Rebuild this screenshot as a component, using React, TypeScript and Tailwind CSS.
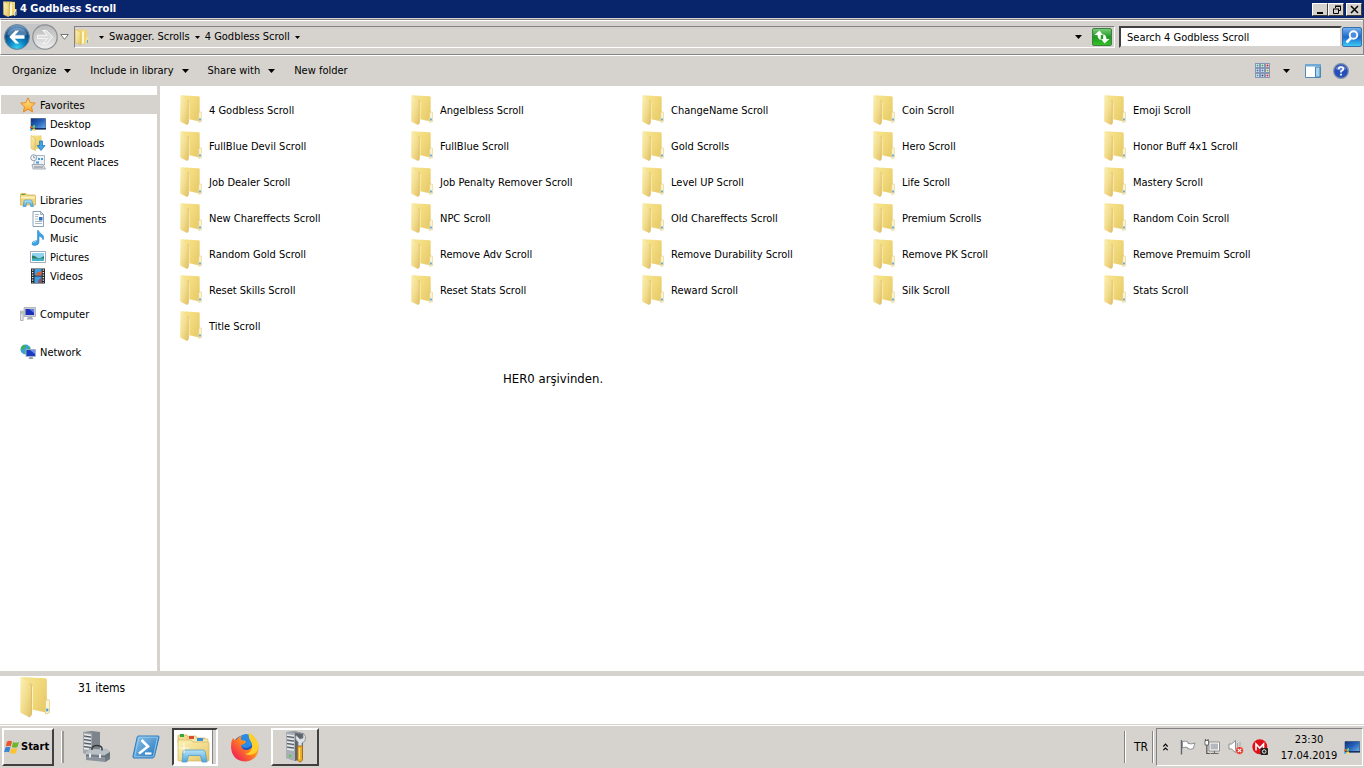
import type { ReactNode } from "react";

const folders = [
    "4 Godbless Scroll", "Angelbless Scroll", "ChangeName Scroll", "Coin Scroll", "Emoji Scroll",
    "FullBlue Devil Scroll", "FullBlue Scroll", "Gold Scrolls", "Hero Scroll", "Honor Buff 4x1 Scroll",
    "Job Dealer Scroll", "Job Penalty Remover Scroll", "Level UP Scroll", "Life Scroll", "Mastery Scroll",
    "New Chareffects Scroll", "NPC Scroll", "Old Chareffects Scroll", "Premium Scrolls", "Random Coin Scroll",
    "Random Gold Scroll", "Remove Adv Scroll", "Remove Durability Scroll", "Remove PK Scroll", "Remove Premuim Scroll",
    "Reset Skills Scroll", "Reset Stats Scroll", "Reward Scroll", "Silk Scroll", "Stats Scroll",
    "Title Scroll",
];

// Gradients shared by every icon, mounted once
function Gradients() {
    return (
        <svg width="0" height="0" className="absolute" aria-hidden="true">
            <defs>
                <linearGradient id="page" x1="0" y1="0" x2="1" y2=".6">
                    <stop offset="0" stopColor="#f6e694" />
                    <stop offset=".5" stopColor="#f3dc80" />
                    <stop offset="1" stopColor="#e9cd6c" />
                </linearGradient>
                <linearGradient id="cover" x1="0" y1="0" x2="1" y2="1">
                    <stop offset="0" stopColor="#fbf0b4" />
                    <stop offset=".5" stopColor="#f3de8f" />
                    <stop offset="1" stopColor="#e0c067" />
                </linearGradient>
                <radialGradient id="back" cx=".5" cy=".95" r=".9">
                    <stop offset="0" stopColor="#35d3f5" />
                    <stop offset=".4" stopColor="#0a7fbd" />
                    <stop offset=".75" stopColor="#0b4a85" />
                    <stop offset="1" stopColor="#6f9cc4" />
                </radialGradient>
                <linearGradient id="silver" x1="0" y1="0" x2="0" y2="1">
                    <stop offset="0" stopColor="#b9b9b9" />
                    <stop offset=".5" stopColor="#cfcfcf" />
                    <stop offset="1" stopColor="#f1f1f1" />
                </linearGradient>
                <linearGradient id="screen" x1="0" y1="0" x2="1" y2="1">
                    <stop offset="0" stopColor="#0d2f7c" />
                    <stop offset=".5" stopColor="#2765bd" />
                    <stop offset="1" stopColor="#6fb4ea" />
                </linearGradient>
                <linearGradient id="star" x1="0" y1="0" x2="0" y2="1">
                    <stop offset="0" stopColor="#ffe98a" />
                    <stop offset="1" stopColor="#fba52b" />
                </linearGradient>
                <linearGradient id="green" x1="0" y1="0" x2="0" y2="1">
                    <stop offset="0" stopColor="#7ccf7c" />
                    <stop offset=".5" stopColor="#1e9a22" />
                    <stop offset="1" stopColor="#35c226" />
                </linearGradient>
                <linearGradient id="azure" x1="0" y1="0" x2="0" y2="1">
                    <stop offset="0" stopColor="#79b4ee" />
                    <stop offset=".5" stopColor="#1b68cf" />
                    <stop offset="1" stopColor="#3fd0f6" />
                </linearGradient>
                <linearGradient id="stand" x1="0" y1="0" x2="0" y2="1">
                    <stop offset="0" stopColor="#b7e3f7" />
                    <stop offset="1" stopColor="#4aa5da" />
                </linearGradient>
                <linearGradient id="shell" x1="0" y1="0" x2="1" y2="1">
                    <stop offset="0" stopColor="#8fc6ec" />
                    <stop offset="1" stopColor="#1f72ba" />
                </linearGradient>
                <linearGradient id="fox" x1="1" y1="0" x2="0" y2="1">
                    <stop offset="0" stopColor="#ffe226" />
                    <stop offset=".45" stopColor="#ff8a1c" />
                    <stop offset=".8" stopColor="#f5334b" />
                    <stop offset="1" stopColor="#e0126f" />
                </linearGradient>
            </defs>
        </svg>
    );
}

function FolderIcon({ className }: { className: string }) {
    return (
        <svg viewBox="0 0 22 30" className={className} aria-hidden="true">
            <path d="M1 .3 18.500 1.200Q19.700 1.300 19.700 2.500V26.500L8 24Z" fill="url(#page)" />
            <path d="M19.300 17h1.500q.9 0 .9 1v8q0 .8-.8.9l-2.200.5V18.500Z" fill="#fbf5d8" stroke="#e3cb80" strokeWidth=".6" />
            <path d="M19.200 23.500h1.600v2h-1.600Z" fill="#4a9be0" />
            <path d="M8 6.500 9.500 7.500V24.500L8 28Z" fill="#fff4b8" />
            <path d="M.3 1Q.3 0 1.200.5L7.300 5Q8.400 5.800 8.400 7V27.500Q8.200 29.500 6.500 29.700L.9 27Q.2 26.500.2 25.500Z" fill="url(#cover)" />
            <path d="M7.300 5Q8.400 5.800 8.400 7V27.500Q8.200 29.500 6.500 29.700" fill="none" stroke="#d5b561" strokeWidth=".6" />
        </svg>
    );
}

function SmallFolder() {
    return (
        <svg viewBox="0 0 14 16" className="h-4 w-3.5 shrink-0" aria-hidden="true">
            <path d="M1 .5 6.500.5V15L5 15Z" fill="#eed27a" />
            <path d="M6.500.5 12 1V14L6 15Z" fill="#f0d470" />
            <path d="M7 3 9 1.500V14L7 15Z" fill="#fdf6cc" />
            <path d="M11 8h2.500v6L11 15Z" fill="#f0dfa0" />
            <path d="M12 11h1v3h-1Z" fill="#5aa8e6" />
            <path d="M.3.500 5 3Q6 4 6 5V15.500H4.500L.5 13.500Z" fill="url(#cover)" stroke="#d8b64e" strokeWidth=".5" />
        </svg>
    );
}

function Icon({ children, className = "size-4" }: { children: ReactNode; className?: string }) {
    return <svg viewBox="0 0 16 16" className={`${className} shrink-0`} aria-hidden="true">{children}</svg>;
}

function Caret({ small = false }: { small?: boolean }) {
    return small ? (
        <svg viewBox="0 0 5 3" className="h-[3px] w-[5px]" aria-hidden="true"><path d="M0 0h5L2.500 3Z" /></svg>
    ) : (
        <svg viewBox="0 0 7 4" className="h-1 w-[7px]" aria-hidden="true"><path d="M0 0h7L3.500 4Z" /></svg>
    );
}

const star = <Icon><path d="M8 .8 10.200 5.600 15.300 6.200 11.500 9.700 12.600 14.900 8 12.300 3.400 14.900 4.500 9.700.7 6.200 5.800 5.600Z" fill="url(#star)" stroke="#e5882a" /></Icon>;

const desktop = (
    <Icon>
        <path d="M1 2.500h14.500V13H1Z" fill="url(#screen)" stroke="#29456f" strokeWidth=".6" />
        <path d="M1 12h15v1.500H1Z" fill="#15305e" />
        <path d="M0 11l2-1v2l-2 .5Z" fill="#f0602a" /><path d="M2.500 10 5 9v2.500L2.500 12Z" fill="#8bd04a" />
        <path d="M0 13h2v2L0 14.500Z" fill="#4ab0f0" /><path d="M2.500 12.500H5V15l-2.500-.5Z" fill="#ffd54a" />
    </Icon>
);

const downloads = (
    <Icon>
        <path d="M1 .5h10.500V13.500L6 14Z" fill="url(#page)" />
        <path d="M1 .5 5.500 3.500V15.500L1 13.500Z" fill="url(#cover)" stroke="#dcbc5c" strokeWidth=".6" />
        <path d="M9.500 6h3v4.500H15L11 15.500 7 10.500h2.500Z" fill="#3fa3e8" stroke="#1b6fb8" strokeWidth=".7" />
    </Icon>
);

const recent = (
    <Icon>
        <path d="M4 1.500h10.500v9.500H4Z" fill="#eef3f8" stroke="#8d98a5" strokeWidth=".7" />
        <path d="M8 4h2v2H8zM11 4h2v2h-2zM6 7.500h3v2H6z" fill="#4a9bd8" />
        <path d="M2 10.500h11l2.500 4.500H3Z" fill="#dfe3e8" stroke="#8b929a" strokeWidth=".7" />
        <path d="M4 13h9" stroke="#7b838c" />
        <circle cx="3.700" cy="3.700" r="3" fill="#f6f9fc" stroke="#8c9db0" /><path d="M3.700 1.800v2h1.500" fill="none" stroke="#526c8e" strokeWidth=".7" />
    </Icon>
);

const libraries = (
    <Icon>
        <path d="M.5 2.500q0-1 1-1H6L7 3h7.500q1 0 1 1V13H.5Z" fill="#f0d678" stroke="#ceaa47" strokeWidth=".7" />
        <path d="M1.500 2.500H5" stroke="#3fae42" />
        <path d="M1 5.500h14" stroke="#fcf3c4" strokeWidth="2" />
        <path d="M3 14.500 4 9q.2-1 1-1h6q.8 0 1 1l1.500 5.500h-2.700L10 11H6.500L6 14.500Z" fill="url(#stand)" stroke="#3d93c8" strokeWidth=".6" />
    </Icon>
);

const documents = (
    <Icon>
        <path d="M3 .5h7.500l3 3v12H3Z" fill="#fff" stroke="#6f8ba0" strokeWidth=".8" />
        <path d="M10.500.5v3h3Z" fill="#cfe0ee" stroke="#6f8ba0" strokeWidth=".6" />
        <path d="M5 3.500h4M5 5.500h3M5 8h3M5 10.500h7M5 12.500h7" stroke="#a9b9c5" />
        <path d="M9 6h3.500v3.500H9Z" fill="#2d72c8" />
    </Icon>
);

const music = (
    <Icon>
        <path d="M8.500.5q.5 2 3 3.500 3.500 2.500 1.500 6 0-3-4-4v6q0 3-4 3.500-3 .3-3-1.700 0-2.500 3.500-3 1.500-.2 2 .2V.5Z" fill="#3ba3e6" stroke="#1d7cc0" strokeWidth=".5" />
        <path d="M3 13q1-1.500 3-1.500" fill="none" stroke="#a9dcf8" />
    </Icon>
);

const pictures = (
    <Icon>
        <path d="M.5 2.500h15v11H.5Z" fill="#fff" stroke="#8a969f" strokeWidth=".8" />
        <path d="M2 4h12v8H2Z" fill="#8fd2f2" /><path d="M2 6.500q3 0 5 2t7-1.500v3H2Z" fill="#2f7f5b" /><path d="M2 9.500h12V12H2Z" fill="#3fb4cc" />
    </Icon>
);

const videos = (
    <Icon>
        <path d="M1 .5h14v15H1Z" fill="#23282d" />
        <path d="M4.500 1h7v6.500h-7ZM4.500 8.500h7V15h-7Z" fill="#3f9ee2" />
        <path d="M6 7.500Q7 3 10 4l1.500-2v5.500Z" fill="#d9603b" /><path d="M8 15q0-4 2-4l1.500-2v6Z" fill="#8a5560" />
        <path d="M2.700 1.500v13M13.300 1.500v13" stroke="#fff" strokeWidth="1.200" strokeDasharray="1.200 1.300" />
    </Icon>
);

const computer = (
    <Icon>
        <path d="M4 1.500h11.500v9H4Z" fill="#c9ccd2" stroke="#9297a2" strokeWidth=".6" />
        <path d="M5.500 3h8.500v6H5.500Z" fill="#1c2fb8" /><path d="M9 3h5v4Z" fill="#5c79e6" />
        <path d="M8 11h4l1.500 2.500h-7Z" fill="#a7abb3" />
        <path d="M.5 5h2.700v9.500H.5Z" fill="#e1e3e6" stroke="#8c9199" strokeWidth=".6" /><path d="M1.200 6.500h1.300v1H1.200Z" fill="#42ad3b" />
    </Icon>
);

const network = (
    <Icon>
        <circle cx="5.500" cy="5.500" r="5" fill="#39a0dc" /><path d="M2 2q3-2 4 0l-2 3-3 1Q1 3 2 2ZM5 7l3-2 2-3 .5 4-3 4-3-.5Z" fill="#3fb34a" />
        <path d="M6 5.500h9.500v7H6Z" fill="#1b3cc0" stroke="#aeb8cc" strokeWidth=".8" /><path d="M10 6h5v4Z" fill="#6e93f0" />
        <path d="M9.500 13h3l1 2H8.500Z" fill="#9ba2af" />
    </Icon>
);

const places = [
    { name: "Favorites", icon: star, items: [{ name: "Desktop", icon: desktop }, { name: "Downloads", icon: downloads }, { name: "Recent Places", icon: recent }] },
    { name: "Libraries", icon: libraries, items: [{ name: "Documents", icon: documents }, { name: "Music", icon: music }, { name: "Pictures", icon: pictures }, { name: "Videos", icon: videos }] },
    { name: "Computer", icon: computer, items: [] },
    { name: "Network", icon: network, items: [] },
];

function TitleBar() {
    const button = "flex h-[13px] items-center justify-center border border-t-white border-l-white border-r-[#404040] border-b-[#404040] bg-[#d6d3ce]";
    return (
        <header className="flex h-[18px] items-center bg-[#08246b] pl-[3px] pr-0.5 text-white">
            <SmallFolder />
            <h1 className="ml-[3px] grow font-bold">4 Godbless Scroll</h1>
            <button className={`${button} w-4`} aria-label="Minimize"><svg viewBox="0 0 9 9" className="size-[9px]"><path d="M1 7h6v2H1Z" /></svg></button>
            <button className={`${button} w-4`} aria-label="Restore"><svg viewBox="0 0 9 9" className="size-[9px]" fill="none" stroke="#000"><path d="M3.500 3V1.500h5v4H7M3 1h6" /><path d="M1.500 4v4.500h5V4M1 4h6" /></svg></button>
            <button className={`${button} ml-0.5 w-4`} aria-label="Close"><svg viewBox="0 0 9 9" className="size-[9px]" stroke="#000" strokeWidth="1.500"><path d="M1 1 8 8M8 1 1 8" /></svg></button>
        </header>
    );
}

function AddressBar() {
    return (
        <div className="border-t border-[#d6d3ce]">
            <div className="flex h-9 items-center border border-t-[#848284] border-r-[#848284] border-b-[#848284] border-l-white pl-[3px] pr-px shadow-[inset_0_1px_0_#fff,0_1px_0_#fff]">
                <div className="flex items-center rounded-full bg-[#c4c6c8]">
                    <button aria-label="Back">
                        <svg viewBox="0 0 26 26" className="size-[26px]">
                            <circle cx="13" cy="13" r="12.400" fill="url(#back)" stroke="#69819a" />
                            <path d="M3 11A10.500 10.500 0 0 1 23 11Q13 13 3 11Z" fill="#fff" opacity=".28" />
                            <path d="M11.500 6.500h3.700L10.800 11.300H20.500v3.400H10.800l4.400 4.800h-3.700L5.300 13Z" fill="#fff" />
                        </svg>
                    </button>
                    <button aria-label="Forward" className="ml-0.5">
                        <svg viewBox="0 0 26 26" className="size-[26px]">
                            <circle cx="13" cy="13" r="12.200" fill="url(#silver)" stroke="#8b8f93" strokeWidth="1.200" />
                            <path d="M14.500 6.500h-3.700L15.200 11.300H5.500v3.400h9.700l-4.400 4.800h3.700L20.700 13Z" fill="#ddd" stroke="#f7f7f7" />
                        </svg>
                    </button>
                </div>
                <button aria-label="Recent pages" className="mx-0.5">
                    <svg viewBox="0 0 9 6" className="h-1.5 w-[9px]"><path d="M.7.500h7.600L4.500 5.300Z" fill="#fff" stroke="#73777c" /></svg>
                </button>
                <div className="ml-[3px] flex h-[22px] grow items-center border border-t-[#848284] border-l-[#848284] border-r-white border-b-white">
                    <SmallFolder />
                    <nav className="ml-2.5 flex grow items-center">
                        <Caret small />
                        <button className="mx-[5px]">Swagger. Scrolls</button>
                        <Caret small />
                        <button className="mx-[5px]">4 Godbless Scroll</button>
                        <Caret small />
                    </nav>
                    <button aria-label="Previous locations"><Caret /></button>
                    <button aria-label="Refresh" className="mx-0.5 ml-2.5">
                        <svg viewBox="0 0 20 18" className="h-[18px] w-5">
                            <rect x=".5" y=".5" width="19" height="17" rx="1.500" fill="url(#green)" stroke="#3f7f43" />
                            <path d="M7.500 2.500 2.500 7H5.500q0 3.500 3 5 .5-2.500.3-5H11Z" fill="#fff" />
                            <path d="M12.500 15.500 17.500 11H14.500q0-3.500-3-5-.5 2.500-.3 5H9Z" fill="#fff" />
                        </svg>
                    </button>
                </div>
                <input
                    className="ml-1 h-[22px] w-[223px] border-2 border-t-[#404040] border-l-[#404040] border-r-[#d6d3ce] border-b-[#d6d3ce] bg-white pl-1.5 placeholder:text-black"
                    type="text"
                    aria-label="Search"
                    placeholder="Search 4 Godbless Scroll"
                />
                <button aria-label="Start search">
                    <svg viewBox="0 0 20 20" className="size-5">
                        <rect x=".5" y=".5" width="19" height="19" rx="1.500" fill="url(#azure)" stroke="#3b6ea8" />
                        <path d="M9 11 4.500 15.500" stroke="#fff" strokeWidth="2.600" />
                        <circle cx="11.500" cy="8" r="3.800" fill="#4d8ddd" stroke="#fff" strokeWidth="1.900" />
                    </svg>
                </button>
            </div>
        </div>
    );
}

function Toolbar() {
    const dots = ["#3b9b9a", "#31a36c", "#b8262b", "#366fa9", "#3d78b9", "#8a9c3f", "#3d9aa9", "#274a86", "#c03333"];
    return (
        <div className="flex h-[31px] items-center px-3">
            {["Organize", "Include in library", "Share with"].map((label) => (
                <button key={label} className="mr-[19px] flex items-center gap-2">{label}<Caret /></button>
            ))}
            <button className="grow text-left">New folder</button>
            <button aria-label="Change view" className="flex items-center gap-[13px]">
                <svg viewBox="0 0 15 15" className="size-[15px]">
                    {dots.map((fill, i) => (
                        <g key={i}>
                            <rect x={(i % 3) * 5 + 0.500} y={Math.floor(i / 3) * 5 + 0.500} width="4" height="4" fill="#fff" stroke="#8796b4" />
                            <rect x={(i % 3) * 5 + 1.500} y={Math.floor(i / 3) * 5 + 1.500} width="2" height="2" fill={fill} />
                        </g>
                    ))}
                </svg>
                <Caret />
            </button>
            <button aria-label="Show preview pane" className="ml-[15px]">
                <svg viewBox="0 0 16 14" className="h-3.5 w-4">
                    <path d="M.5.500h15v13H.5Z" fill="#fff" stroke="#5489b8" /><path d="M0 0h16v2.500H0Z" fill="#6fa9d6" />
                    <path d="M10.500 3H15v10h-4.500Z" fill="#a9d3ec" stroke="#4484b3" />
                </svg>
            </button>
            <button aria-label="Help" className="ml-3 mr-[3px]">
                <svg viewBox="0 0 16 16" className="size-4">
                    <circle cx="8" cy="8" r="7.400" fill="#2450b8" stroke="#8793ad" strokeWidth="1.200" />
                    <path d="M2.500 6a6 6 0 0 1 11 0Q8 8.500 2.500 6Z" fill="#fff" opacity=".3" />
                    <path d="M5.700 6.300Q5.700 4 8 4t2.300 2Q10.300 7.300 8 8.300v1.300" fill="none" stroke="#fff" strokeWidth="1.700" /><path d="M7.100 10.800h1.800v1.800H7.100Z" fill="#fff" />
                </svg>
            </button>
        </div>
    );
}

function Sidebar() {
    return (
        <nav className="w-40 shrink-0 border-r-3 border-[#d6d3ce] pl-px pt-[9px]">
            {places.map((place) => (
                <section key={place.name} className="mb-[19px]">
                    <a href="#" className={place.name === "Favorites" ? "flex h-[19px] items-center gap-1 bg-[#d6d3ce] pl-[19px]" : "flex h-[19px] items-center gap-1 pl-[19px]"}>
                        {place.icon}<span className="pt-0.5">{place.name}</span>
                    </a>
                    {place.items.map((item) => (
                        <a key={item.name} href="#" className="flex h-[19px] items-center gap-1 pl-[29px]">{item.icon}<span className="pt-0.5">{item.name}</span></a>
                    ))}
                </section>
            ))}
        </nav>
    );
}

function Tower() {
    return (
        <>
            <path d="M3 1 12 0 20 2V27L12 30 3 27Z" fill="#8f969d" />
            <path d="M12 2 20 3V27L12 30Z" fill="#5e656d" />
            <path d="M3 1 12 2V30L3 27Z" fill="#a9afb6" />
            <path d="M4 4 11 5M4 7.500 11 8.500M4 11 11 12M4 14.500 11 15.500M4 18 11 19" stroke="#e9ecee" strokeWidth="1.300" />
            <path d="M4 5.500 11 6.500M4 9 11 10M4 12.500 11 13.500M4 16 11 17" stroke="#50565d" />
        </>
    );
}

function Taskbar() {
    return (
        <footer className="flex h-11 items-center border-t border-[#d6d3ce] bg-[#d6d3ce] shadow-[inset_0_1px_0_#fff]">
            <button className="ml-0.5 flex h-[38px] w-[52px] items-center gap-px border-2 border-t-white border-l-white border-r-[#404040] border-b-[#404040] font-bold">
                <svg viewBox="0 0 16 16" className="size-4 shrink-0">
                    <path d="M3 2.500Q6 1 8 2.500L6.700 7.500Q4.500 6 1.700 7.500Z" fill="#e9542a" />
                    <path d="M9 3q2.500 1.500 6 0l-1.500 5q-3 1.300-5.700 0Z" fill="#6fb52f" />
                    <path d="M1.400 8.500q2.800-1.500 5 0L5 13.300Q3 12 0 13.300Z" fill="#3a82d6" />
                    <path d="M7.500 9q2.700 1.300 5.700 0L12 14q-3.500 1.300-6 0Z" fill="#fbc42c" />
                </svg>
                Start
            </button>
            <div className="ml-[7px] h-8 w-[3px] border-r-2 border-l border-l-white border-r-[#9c9a97]" />
            <button aria-label="Server Manager" className="ml-4">
                <svg viewBox="0 0 32 32" className="size-8">
                    <path d="M3 1 12 0 20 1V22L12 24 3 22Z" fill="#7d848b" />
                    <path d="M3 1 12 2V24L3 22Z" fill="#a1a7ad" />
                    <path d="M4 3.500 11 4.500M4 7 11 8M4 10.500 11 11.500M4 14 11 15M4 17.500 9 18" stroke="#eceef0" strokeWidth="1.400" />
                    <path d="M4 5 11 6M4 8.500 11 9.500M4 12 11 13M4 15.500 11 16.500" stroke="#50565d" />
                    <path d="M6 21 11 18 27 18.500 30 21V28L25 31 6 29Z" fill="#8b949c" />
                    <path d="M6 21 11 18 27 18.500 30 21 25 24 6 23Z" fill="#b9c0c6" />
                    <path d="M25 24 30 21V28L25 31Z" fill="#6f7880" />
                    <path d="M12 19v-2q1-2.500 5-2.500t5 2.500v2.500" fill="none" stroke="#33383d" strokeWidth="1.400" />
                    <path d="M6 24.500 25 25.500 30 23" fill="none" stroke="#5a636b" strokeWidth=".8" />
                    <path d="M9 22.500h2v4H9zM19 23h2v4h-2z" fill="#e9edf0" />
                </svg>
            </button>
            <button aria-label="Windows PowerShell" className="ml-5">
                <svg viewBox="0 0 28 24" className="h-6 w-7">
                    <path d="M6 1h20q1.500 0 1 1.500L22.500 21Q22 23 20.500 23H2Q.500 23 1 21L5 3Q5.300 1 6 1Z" fill="url(#shell)" stroke="#2b7dc0" />
                    <path d="M7 2.200H25.500L21.300 21.800H2.500Z" fill="none" stroke="#a5d0ee" strokeWidth=".8" />
                    <path d="M9.500 5 16 11.500 7 18.500" fill="none" stroke="#fff" strokeWidth="2.600" /><path d="M13 18.500h6.500" stroke="#fff" strokeWidth="2.200" />
                </svg>
            </button>
            <button aria-label="Windows Explorer" className="ml-3 flex h-[38px] w-[46px] items-center border-2 border-t-[#404040] border-l-[#404040] border-r-white border-b-white bg-white">
                <svg viewBox="0 0 34 32" className="ml-0.5 h-8 w-[34px] shrink-0">
                    <path d="M2 5q0-1 1-1h8l1 3h17v5H2Z" fill="#f1da8d" stroke="#cfae5b" strokeWidth=".7" />
                    <path d="M4 3h4v3H4Z" fill="#32a93e" /><path d="M12 7q0-2 1-2h7l1 3h11v5H12Z" fill="#f8e8ac" stroke="#d6b763" strokeWidth=".7" />
                    <path d="M13 5h5v3h-5Z" fill="#dd4b30" /><path d="M21 7h6v3h-6Z" fill="#3294d2" />
                    <path d="M2 9h13l2 2h15q1 0 1 1V29q0 1-1 1H3q-1 0-1-1Z" fill="url(#cover)" stroke="#d4b55f" strokeWidth=".7" />
                    <path d="M6 31 7 21q.2-2 2-2h18q2 0 2.200 2L31 31h-5l-1.500-6.500h-12L11 31Z" fill="url(#stand)" stroke="#559fc9" strokeWidth=".8" />
                    <path d="M8 12v10M3 17h10" stroke="#fff" strokeWidth=".8" />
                </svg>
                <span className="ml-auto h-full w-1 shrink-0 border-l border-[#848284] bg-[#d6d3ce]" />
            </button>
            <button aria-label="Firefox" className="ml-3">
                <svg viewBox="0 0 30 30" className="size-[30px]">
                    <circle cx="15" cy="15" r="12" fill="#1b51c6" /><circle cx="16" cy="9" r="7" fill="#2a8be6" />
                    <path d="M3 6Q4 8 6 8q3-4 6-4.500Q10.500 5.500 11 8q3 0 5 1.500-1 2.500-5 3.500.500 5 6 5 4-.5 5.500-4Q24 8 19 1q5 2 6.500 6 3 3 3 9Q28 28 15.500 29.500 3 29 1.200 17 .500 10 3 6Z" fill="url(#fox)" />
                    <path d="M19 1q-1 4 1 7 3 4 2 8-1 5-7 6 8 3 12-3 4-7-2-12Q23 2 19 1Z" fill="#ffd02b" />
                </svg>
            </button>
            <button aria-label="Server tools" className="ml-[11px] flex h-[38px] w-12 items-center justify-center border-2 border-t-white border-l-white border-r-[#404040] border-b-[#404040]">
                <svg viewBox="0 0 24 32" className="h-8 w-6">
                    <Tower />
                    <circle cx="7" cy="25" r="1.200" fill="#49d33a" />
                    <path d="M15 15V11Q11 8 13 4l4 4 3-1V2q4 3 2 8l-3 2v4Z" fill="#dfe2e5" stroke="#777e85" strokeWidth=".7" />
                    <path d="M14.500 15h5v14q-2.500 4-5 0Z" fill="#f0ac22" stroke="#9c6a12" strokeWidth=".8" /><path d="M16.500 17v11" stroke="#ffe08a" />
                </svg>
            </button>

            <div className="ml-auto h-8 w-0.5 border-r border-l border-l-[#848284] border-r-white" />
            <span className="ml-2 text-xs">TR</span>
            <div className="ml-1 h-8 w-0.5 border-r border-l border-l-[#848284] border-r-white" />
            <div className="ml-0.5 mr-px flex h-[38px] items-center border border-t-[#848284] border-l-[#848284] border-r-white border-b-white pl-1.5 pr-0.5">
                <button aria-label="Show hidden icons"><svg viewBox="0 0 5 8" className="h-2 w-[5px]" fill="none" stroke="#000" strokeWidth="1.200"><path d="M.3 3.500 2.500 1.200 4.700 3.500M.3 7.200 2.500 5 4.700 7.200" /></svg></button>
                <Icon className="ml-3 size-4">
                    <path d="M1.500 1v14.500" stroke="#62676d" strokeWidth="1.400" />
                    <path d="M2.500 2.500Q5 1.500 8 3V4.500q3 1 7-.5-1 2-1.500 5.500-3 1.500-6 0V8.500Q5 7.500 2.500 9Z" fill="#fff" stroke="#777c82" strokeWidth=".8" />
                </Icon>
                <Icon className="ml-2 size-4">
                    <path d="M5 3h10.500v9H5Z" fill="#fff" stroke="#777" strokeWidth=".8" /><path d="M6.500 4.500h7.500v6H6.500Z" fill="#b4b7bb" />
                    <path d="M6.500 14.500h8M10.500 12v2" stroke="#666" />
                    <path d="M1 1.500h3.500V6H1Z" fill="#fff" stroke="#555" strokeWidth=".8" /><path d="M1.500 0v2M4 0v2" stroke="#555" />
                    <path d="M2.800 6v8.500h3" fill="none" stroke="#555" strokeWidth="1.200" />
                </Icon>
                <Icon className="ml-2 size-4">
                    <path d="M1 5h2.500L7.500 1.500v12L3.500 10H1Z" fill="#fff" stroke="#74787d" strokeWidth=".8" /><path d="M9.500 4v4M12 3v4" stroke="#a2a6aa" />
                    <circle cx="11.500" cy="11.500" r="4" fill="#dc3a2c" stroke="#fff" strokeWidth=".5" /><path d="M9.800 9.800 13.200 13.200M13.200 9.800 9.800 13.200" stroke="#fff" strokeWidth="1.200" />
                </Icon>
                <Icon className="ml-2 size-4">
                    <circle cx="7.800" cy="7.800" r="7.500" fill="#df1018" /><path d="M4 11.500V5l3.800 4L11.500 5v5" fill="none" stroke="#fff" strokeWidth="1.600" />
                    <rect x="8.500" y="9" width="7.500" height="7" rx="1" fill="#222" /><circle cx="12.200" cy="12.500" r="1.800" fill="none" stroke="#fff" strokeWidth=".9" />
                </Icon>
                <div className="ml-3 w-[58px] pt-0.5 text-center leading-4 whitespace-nowrap">23:30<br />17.04.2019</div>
                <span className="ml-1.5 flex">{desktop}</span>
            </div>
        </footer>
    );
}

export default function App() {
    return (
        <div className="flex min-h-screen flex-col bg-[#d6d3ce] font-['DejaVu_Sans_Condensed','DejaVu_Sans',sans-serif] text-[11px] leading-[14px] text-black">
            <Gradients />
            <TitleBar />
            <AddressBar />
            <Toolbar />
            <div className="flex grow bg-white">
                <Sidebar />
                <main className="grow pl-5 pt-1.5">
                    <ul className="grid grid-cols-[repeat(auto-fill,231px)]">
                        {folders.map((name) => (
                            <li key={name} className="flex h-9 items-center gap-[7px]"><FolderIcon className="h-[30px] w-[22px] shrink-0" /><span className="pt-0.5">{name}</span></li>
                        ))}
                    </ul>
                    <p className="mt-7 ml-[323px] text-[13px] leading-[14px]">HER0 arşivinden.</p>
                </main>
            </div>
            <div className="flex h-[53px] items-start border-t-5 border-[#d6d3ce] bg-white pl-5">
                <FolderIcon className="h-[42px] w-[30px]" />
                <span className="mt-1 ml-7 text-xs">31 items</span>
            </div>
            <Taskbar />
        </div>
    );
}
